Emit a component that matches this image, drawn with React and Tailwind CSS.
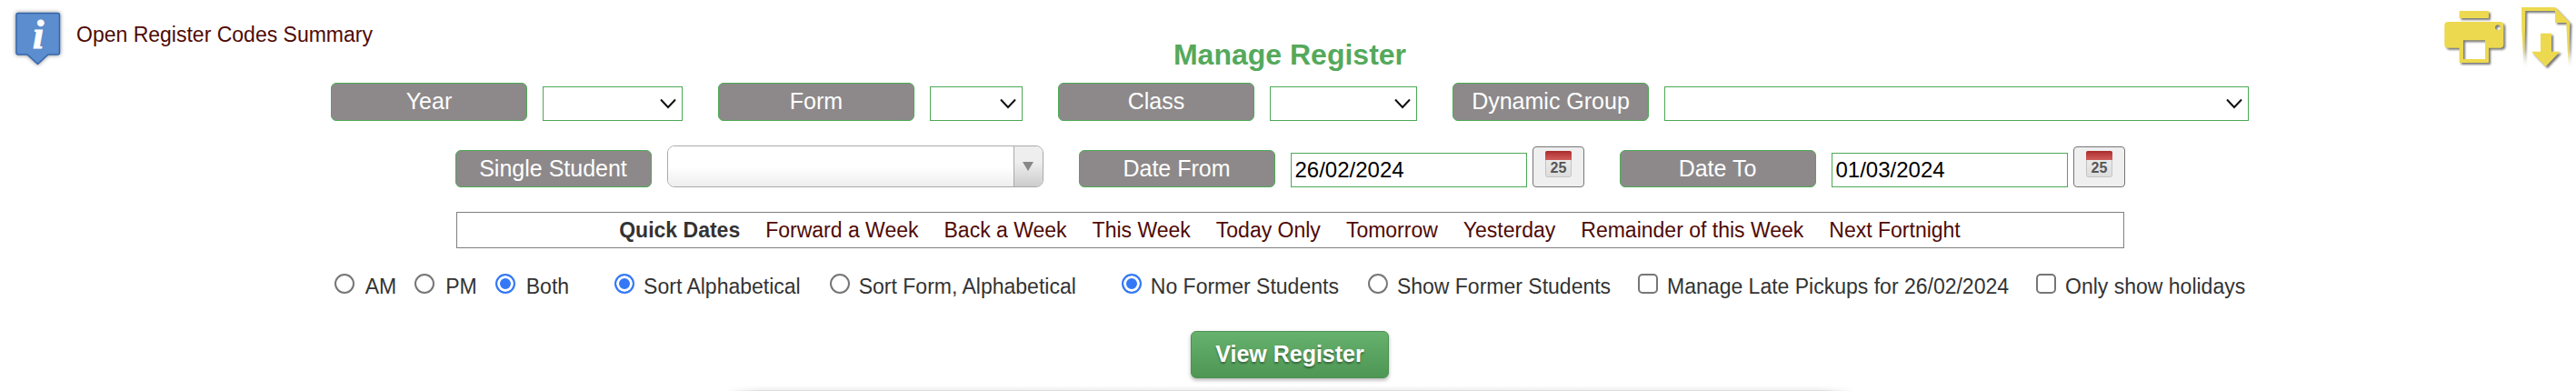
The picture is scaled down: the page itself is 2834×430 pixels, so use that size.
import { useState } from 'react'

const quickDates = [
  'Forward a Week',
  'Back a Week',
  'This Week',
  'Today Only',
  'Tomorrow',
  'Yesterday',
  'Remainder of this Week',
  'Next Fortnight'
]

const sessions = ['AM', 'PM', 'Both']
const sortOptions = ['Sort Alphabetical', 'Sort Form, Alphabetical']
const formerOptions = ['No Former Students', 'Show Former Students']

function InfoIcon() {
  return (
    <svg viewBox="0 0 60 68" className="w-[60px] h-[68px] shrink-0" aria-hidden="true">
      <defs>
        <filter id="infoShadow" x="-20%" y="-20%" width="140%" height="140%">
          <feDropShadow dx="0" dy="0" stdDeviation="2" floodColor="#000" floodOpacity="0.5" />
        </filter>
      </defs>
      <path
        d="M8 6.5h43.500q2 0 2 2v41.500q0 2-2 2H41L29.500 62.500 18 52H8q-2 0-2-2V8.500q0-2 2-2z"
        fill="#5b8dce"
        stroke="#3565a8"
        strokeWidth="1.500"
        filter="url(#infoShadow)"
      />
      <text
        x="30"
        y="45"
        textAnchor="middle"
        fill="#fff"
        stroke="#fff"
        strokeWidth="1"
        fontSize="44"
        fontWeight="bold"
        fontStyle="italic"
        fontFamily="'Liberation Serif', serif"
      >
        i
      </text>
    </svg>
  )
}

function PrintIcon() {
  return (
    <svg viewBox="150 0 225 240" className="w-[75px] h-[80px] drop-shadow-[2px_2px_1px_rgba(60,60,60,0.7)]" aria-hidden="true">
      <g fill="#ecd94f">
        <path d="M215 36h97v24h-97z" />
        <path
          fillRule="evenodd"
          d="M178 72h171q12 0 12 12v62q0 12-12 12h-37v49h-97v-49h-37q-12 0-12-12V84q0-12 12-12zM228 133v62h72v-62zM342 82a9 9 0 1 0 0.100 0z"
        />
      </g>
    </svg>
  )
}

function DownloadIcon() {
  return (
    <svg viewBox="405 0 195 240" className="w-[65px] h-[80px] drop-shadow-[2px_2px_1px_rgba(60,60,60,0.7)]" aria-hidden="true">
      <defs>
        <linearGradient id="pageFade" x1="0" y1="0" x2="0" y2="1">
          <stop offset="0.700" stopColor="#ecd94f" />
          <stop offset="1" stopColor="#ecd94f" stopOpacity="0" />
        </linearGradient>
      </defs>
      <path
        d="M420 24h111l49 51-5 147-7-147h-37V36h-98l-1 60-4 126-7-126z"
        fill="url(#pageFade)"
      />
      <path d="M483 110h36v60h28l-47 50-47-50h30z" fill="#ecd94f" />
    </svg>
  )
}

function CalendarIcon() {
  return (
    <svg viewBox="0 0 29 29" className="w-[29px] h-[29px]" aria-hidden="true">
      <defs>
        <linearGradient id="calTop" x1="0" y1="0" x2="0" y2="1">
          <stop offset="0" stopColor="#a52a2a" />
          <stop offset="0.300" stopColor="#b93c3c" />
          <stop offset="1" stopColor="#cf5f5b" />
        </linearGradient>
        <linearGradient id="calPage" x1="0" y1="0" x2="0" y2="1">
          <stop offset="0" stopColor="#f2f2f2" />
          <stop offset="1" stopColor="#dcdcdc" />
        </linearGradient>
      </defs>
      <rect x="0.500" y="0.500" width="28" height="28" rx="2" fill="url(#calPage)" stroke="#c4c4c4" />
      <path d="M2 0h25q2 0 2 2v8H0V2q0-2 2-2z" fill="url(#calTop)" />
      <text
        x="14.500"
        y="24"
        textAnchor="middle"
        fill="#555"
        fontSize="16"
        fontWeight="bold"
        fontFamily="'Liberation Sans', sans-serif"
      >
        25
      </text>
    </svg>
  )
}

function FieldLabel({ htmlFor, className, children }) {
  return (
    <label
      htmlFor={htmlFor}
      className={`flex items-center justify-center w-[216px] pb-0.5 rounded-md border border-[#4ca956] bg-[#8d898a] text-[25px] text-white ${className}`}
    >
      {children}
    </label>
  )
}

function SelectField({ id, label, width }) {
  return (
    <div className="flex items-end gap-[17px]">
      <FieldLabel htmlFor={id} className="h-[42px]">
        {label}
      </FieldLabel>
      <div className={`grid items-center ${width}`}>
        <select
          id={id}
          className="col-start-1 row-start-1 appearance-none w-full h-[38px] border border-[#4ca956] bg-white px-2 text-2xl text-black"
        >
          <option value=""></option>
        </select>
        <svg
          viewBox="0 0 18 12"
          className="col-start-1 row-start-1 justify-self-end mr-[7px] w-[18px] h-3 pointer-events-none"
          aria-hidden="true"
        >
          <path d="M1 1.500l8 8.500 8-8.500" fill="none" stroke="#111" strokeWidth="2" />
        </svg>
      </div>
    </div>
  )
}

function DateField({ id, label, value, onChange }) {
  return (
    <div className="flex items-end">
      <FieldLabel htmlFor={id} className="h-[41px]">
        {label}
      </FieldLabel>
      <input
        id={id}
        type="text"
        value={value}
        onChange={e => onChange(e.target.value)}
        className="ml-[17px] w-[260px] h-[38px] border border-[#4ca956] bg-white px-1 text-2xl text-black"
      />
      <button
        type="button"
        aria-label={`Pick ${label}`}
        className="ml-1.5 flex justify-center w-[57px] h-[45px] pt-1 rounded-sm border border-[#767676] bg-[#efefef]"
      >
        <CalendarIcon />
      </button>
    </div>
  )
}

function RadioGroup({ name, options, value, onChange, className, labelClass }) {
  return (
    <div className={`flex ${className}`}>
      {options.map(option => (
        <label key={option} className={`flex items-start ${labelClass}`}>
          <input
            type="radio"
            name={name}
            checked={value === option}
            onChange={() => onChange(option)}
            className="appearance-none size-[22px] rounded-full border-2 border-[#767676] bg-white checked:border-[#3478f6] checked:bg-[#3478f6] checked:shadow-[inset_0_0_0_3px_white]"
          />
          {option}
        </label>
      ))}
    </div>
  )
}

function CheckOption({ label }) {
  return (
    <label className="flex items-start gap-2.5">
      <input
        type="checkbox"
        className="appearance-none size-[22px] rounded-[5px] border-2 border-[#767676] bg-white checked:bg-[#3478f6]"
      />
      {label}
    </label>
  )
}

export default function App() {
  const [dateFrom, setDateFrom] = useState('26/02/2024')
  const [dateTo, setDateTo] = useState('01/03/2024')
  const [session, setSession] = useState('Both')
  const [sort, setSort] = useState('Sort Alphabetical')
  const [former, setFormer] = useState('No Former Students')

  return (
    <div className="bg-white font-['Liberation_Sans',Arial,sans-serif] text-[23px] leading-7 text-[#333] whitespace-nowrap">
      <header className="grid grid-cols-[1fr_auto_1fr] items-start pb-[11px]">
        <a href="#codes" className="flex items-center gap-3 pl-3 pt-2 text-[#500a05]">
          <InfoIcon />
          <span className="pb-2">Open Register Codes Summary</span>
        </a>
        <h1 className="pl-1 pt-[42px] text-[32px] leading-9 font-bold text-[#54a95c]">
          Manage Register
        </h1>
        <div className="flex justify-end gap-2.5">
          <button type="button" aria-label="Print">
            <PrintIcon />
          </button>
          <button type="button" aria-label="Download">
            <DownloadIcon />
          </button>
        </div>
      </header>

      <form className="flex flex-col items-center pl-1" onSubmit={e => e.preventDefault()}>
        <div className="flex items-end gap-[39px]">
          <SelectField id="year" label="Year" width="w-[154px]" />
          <SelectField id="form" label="Form" width="w-[102px]" />
          <SelectField id="class" label="Class" width="w-[162px]" />
          <SelectField id="group" label="Dynamic Group" width="w-[643px]" />
        </div>

        <div className="mt-[27px] flex items-end gap-[39px]">
          <div className="flex items-end gap-[17px]">
            <FieldLabel htmlFor="student" className="h-[41px]">
              Single Student
            </FieldLabel>
            <div className="flex w-[414px] h-[46px] overflow-hidden rounded-lg border border-[#aaa]">
              <input
                id="student"
                type="text"
                className="min-w-0 flex-1 bg-linear-to-b from-white from-50% to-[#eee] px-2 text-2xl text-black"
              />
              <button
                type="button"
                aria-label="Show students"
                className="flex items-center justify-center w-8 border-l border-[#aaa] bg-linear-to-b from-[#eee] from-40% to-[#ccc]"
              >
                <svg viewBox="0 0 12 10" className="w-3 h-2.5" aria-hidden="true">
                  <path d="M0 0h12L6 10z" fill="#888" />
                </svg>
              </button>
            </div>
          </div>
          <DateField id="dateFrom" label="Date From" value={dateFrom} onChange={setDateFrom} />
          <DateField id="dateTo" label="Date To" value={dateTo} onChange={setDateTo} />
        </div>

        <div className="mt-[27px] flex items-center justify-center gap-7 w-[1835px] max-w-full h-10 border border-[#808080]">
          <strong>Quick Dates</strong>
          {quickDates.map(label => (
            <a key={label} href="#dates" className="text-[#500a05]">
              {label}
            </a>
          ))}
        </div>

        <div className="mt-7 flex gap-[30px]">
          <RadioGroup
            name="session"
            options={sessions}
            value={session}
            onChange={setSession}
            className="gap-5 mr-5"
            labelClass="gap-3"
          />
          <RadioGroup
            name="sort"
            options={sortOptions}
            value={sort}
            onChange={setSort}
            className="gap-8 mr-5"
            labelClass="gap-2.5"
          />
          <RadioGroup
            name="former"
            options={formerOptions}
            value={former}
            onChange={setFormer}
            className="gap-8"
            labelClass="gap-2.5"
          />
          <CheckOption label={`Manage Late Pickups for ${dateFrom}`} />
          <CheckOption label="Only show holidays" />
        </div>

        <button
          type="submit"
          className="mt-[35px] h-[52px] px-[26px] pb-0.5 rounded-md border border-[#4a9152] bg-linear-to-b from-[#67b16e] to-[#4d9653] text-[25px] font-bold text-white text-shadow-[0_2px_2px_rgba(0,0,0,0.35)] shadow-[0_2px_4px_rgba(0,0,0,0.3)]"
        >
          View Register
        </button>
      </form>

      <div className="pl-1">
        <div className="mx-auto mt-2 w-[1240px] max-w-full h-1.5 border-b border-[#ddd] bg-linear-to-b from-white to-[#f0f0f0] mask-x-from-97%" />
      </div>
    </div>
  )
}
